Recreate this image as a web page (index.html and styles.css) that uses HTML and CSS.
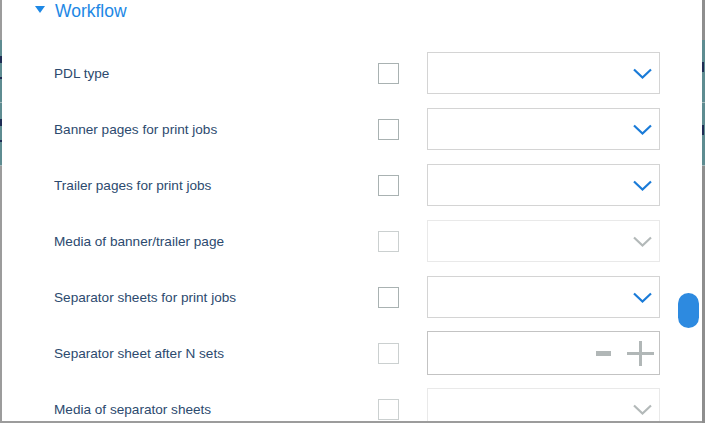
FILE: index.html
```html
<!DOCTYPE html>
<html lang="en">
<head>
    <meta charset="UTF-8">
    <meta name="viewport" content="width=device-width, initial-scale=1.0">
    <title>Workflow settings</title>
    <link rel="stylesheet" href="styles.css">
</head>
<body>
    <div class="backdrop">
        <div class="edge edge-left">
            <div class="band"><span class="mark mark-big"></span><span class="mark mark-small"></span></div>
            <div class="band"><span class="mark mark-big"></span><span class="mark mark-small"></span></div>
        </div>

        <div class="dialog">
            <div class="section-head">
                <span class="caret"></span>Workflow
            </div>

            <ul class="rows">
                <li class="row">
                    <span class="label">PDL type</span>
                    <span class="check"></span>
                    <div class="select">
                        <svg class="chev" width="19" height="11" viewBox="0 0 19 11"><path d="M1 1.5 L9.5 9.5 L18 1.5" /></svg>
                    </div>
                </li>
                <li class="row">
                    <span class="label">Banner pages for print jobs</span>
                    <span class="check"></span>
                    <div class="select">
                        <svg class="chev" width="19" height="11" viewBox="0 0 19 11"><path d="M1 1.5 L9.5 9.5 L18 1.5" /></svg>
                    </div>
                </li>
                <li class="row">
                    <span class="label">Trailer pages for print jobs</span>
                    <span class="check"></span>
                    <div class="select">
                        <svg class="chev" width="19" height="11" viewBox="0 0 19 11"><path d="M1 1.5 L9.5 9.5 L18 1.5" /></svg>
                    </div>
                </li>
                <li class="row">
                    <span class="label">Media of banner/trailer page</span>
                    <span class="check off"></span>
                    <div class="select off">
                        <svg class="chev" width="19" height="11" viewBox="0 0 19 11"><path d="M1 1.5 L9.5 9.5 L18 1.5" /></svg>
                    </div>
                </li>
                <li class="row">
                    <span class="label">Separator sheets for print jobs</span>
                    <span class="check"></span>
                    <div class="select">
                        <svg class="chev" width="19" height="11" viewBox="0 0 19 11"><path d="M1 1.5 L9.5 9.5 L18 1.5" /></svg>
                    </div>
                </li>
                <li class="row">
                    <span class="label">Separator sheet after N sets</span>
                    <span class="check off"></span>
                    <div class="number">
                        <span class="minus"></span>
                        <span class="plus"></span>
                    </div>
                </li>
                <li class="row">
                    <span class="label">Media of separator sheets</span>
                    <span class="check off"></span>
                    <div class="select off">
                        <svg class="chev" width="19" height="11" viewBox="0 0 19 11"><path d="M1 1.5 L9.5 9.5 L18 1.5" /></svg>
                    </div>
                </li>
            </ul>

            <div class="scroll-thumb"></div>
        </div>

        <div class="edge edge-right">
            <div class="band"><span class="mark mark-letter"></span></div>
            <div class="band"><span class="mark mark-letter"></span></div>
        </div>
    </div>
</body>
</html>
```

FILE: styles.css
```css
body{
    margin:0;
    background-color:#9c9c9c;
    font-family:"Liberation Sans", Arial, sans-serif;
    overflow:hidden;
}
.backdrop{
    display:flex;
    height:423px;
}

/* page behind the dialog, only its edges show */
.edge{
    flex:none;
    padding-top:40px;
}
.edge-left{
    width:2px;
}
.edge-right{
    width:3px;
    background-color:#8e8e8e;
}
.band{
    height:62px;
    background-color:#5e8c91;
    border-bottom:1px solid #a4b9bb;
    overflow:hidden;
}
.mark{
    display:block;
    background-color:#1f2d55;
}
.mark-big{
    width:2px;
    height:7px;
    margin-top:16px;
}
.mark-small{
    width:2px;
    height:2px;
    margin-top:14px;
}
.mark-letter{
    width:2px;
    height:10px;
    margin-top:22px;
}

.dialog{
    position:relative;
    flex:1;
    height:421px;
    background-color:white;
    overflow:hidden;
}
.section-head{
    display:flex;
    align-items:center;
    height:18px;
    line-height:18px;
    padding-top:2px;
    padding-left:33px;
    color:#1e88e5;
    font-size:17.5px;
}
.caret{
    width:0;
    height:0;
    border-left:5px solid transparent;
    border-right:5px solid transparent;
    border-top:7px solid #1e88e5;
    margin-right:10px;
    margin-top:-3px;
}

.rows{
    margin:25px 0 0;
    padding:0 0 0 52px;
}
.row{
    list-style:none;
    display:grid;
    grid-template-columns:324px 49px 233px;
    align-items:center;
    height:56px;
}
.label{
    color:#2c4a6e;
    font-size:13.6px;
}
.check{
    width:19px;
    height:19px;
    border:1px solid #a9b2b2;
}
.check.off{
    border-color:#cbd0d0;
}
.select{
    box-sizing:border-box;
    height:42px;
    border:1px solid #d4d4d4;
    display:flex;
    align-items:center;
    justify-content:flex-end;
    padding-right:7px;
}
.select.off{
    border-color:#e9e9e9;
}
.chev{
    fill:none;
    stroke:#1a7bd8;
    stroke-width:2.2;
}
.select.off .chev{
    stroke:#b3b9b9;
}
.number{
    box-sizing:border-box;
    height:44px;
    border:1px solid #c3c3c3;
    display:flex;
    align-items:center;
    justify-content:flex-end;
    gap:16px;
    padding-right:5px;
}
.minus{
    width:15px;
    height:5px;
    background-color:#b1b7b7;
}
.plus{
    position:relative;
    width:27px;
    height:25px;
}
.plus::before,
.plus::after{
    content:"";
    position:absolute;
    background-color:#b1b7b7;
}
.plus::before{
    left:0;
    right:0;
    top:11px;
    height:3px;
}
.plus::after{
    top:0;
    bottom:0;
    left:12px;
    width:3px;
}

/* overlay scrollbar */
.scroll-thumb{
    position:absolute;
    left:676px;
    top:293px;
    width:21px;
    height:35px;
    border-radius:11px;
    background-color:#2d8ae0;
}
```
